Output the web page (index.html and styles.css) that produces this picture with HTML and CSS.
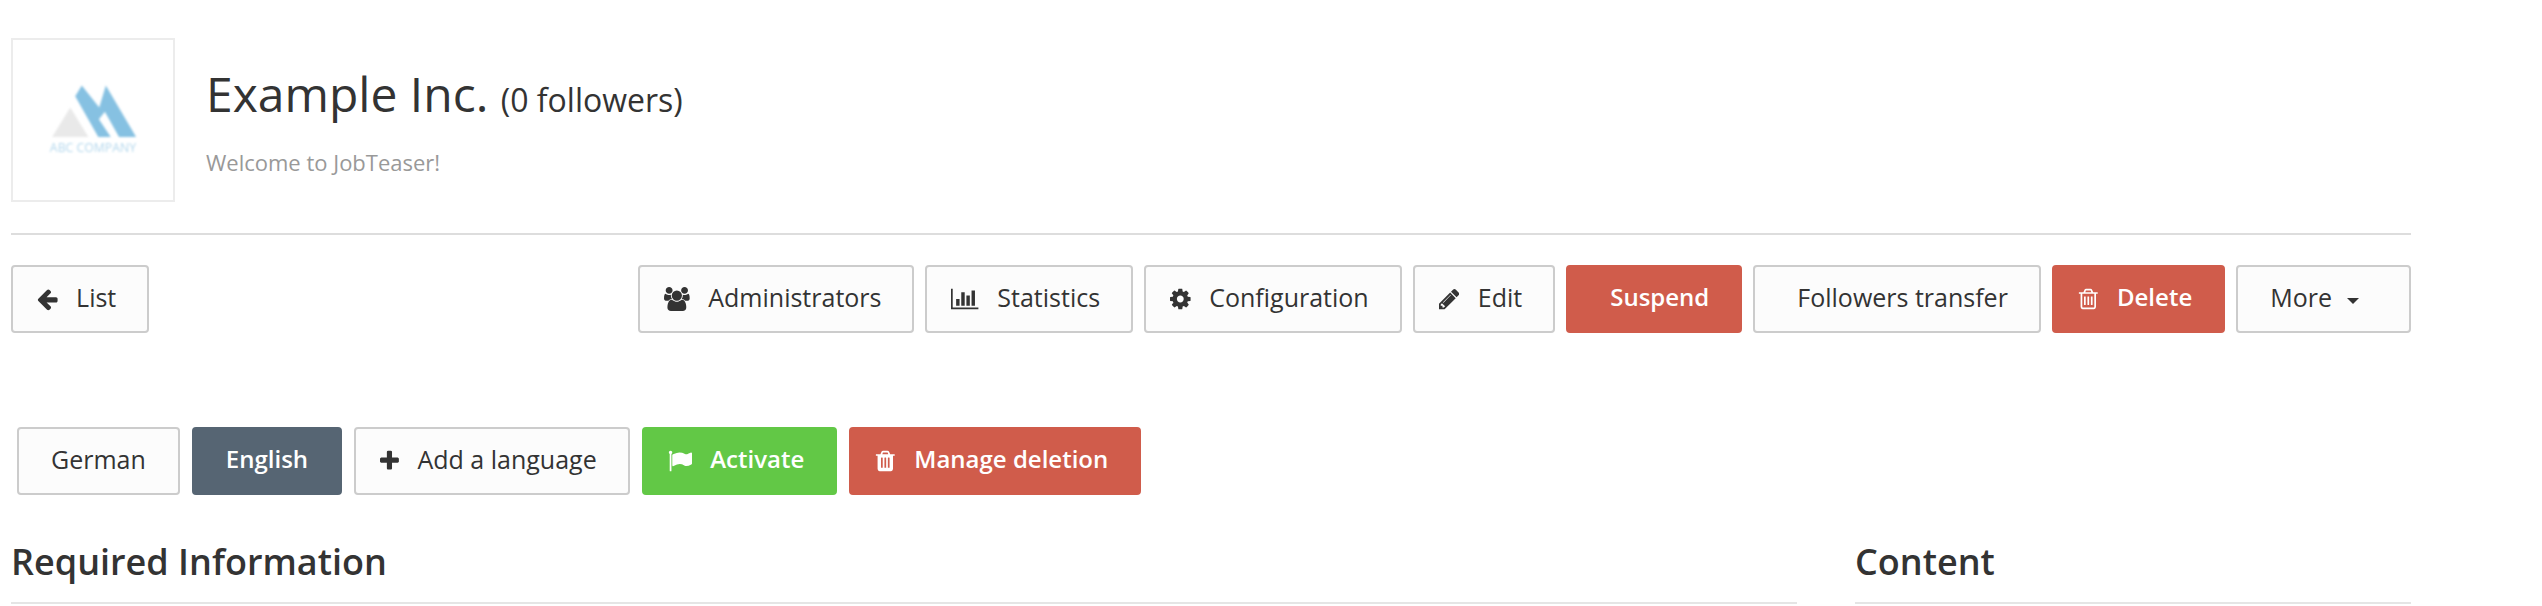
FILE: index.html
```html
<!DOCTYPE html>
<html lang="en">
<head>
<meta charset="utf-8">
<title>Example Inc.</title>
<link rel="stylesheet" href="styles.css">
</head>
<body>
<div class="page">
  <header class="profile">
    <div class="logo">
      <svg viewBox="36 27 486 486" width="160" height="160">
        <defs><filter id="soft"><feGaussianBlur stdDeviation="2.8"/></filter></defs>
        <g filter="url(#soft)">
          <polygon points="210,232 265,322 155,322" fill="#e9e9e9"/>
          <polygon points="225,198 245,165 298,232 318,165 410,322 358,322 315,245 297,268 333,322 295,322" fill="#86c1e2"/>
          <text x="148" y="368" font-size="40" textLength="262" lengthAdjust="spacingAndGlyphs" class="logo-text">ABC COMPANY</text>
        </g>
      </svg>
    </div>
    <div class="identity">
      <h1 class="title">Example Inc. <small class="followers">(0 followers)</small></h1>
      <p class="welcome">Welcome to JobTeaser!</p>
    </div>
  </header>

  <hr class="rule">

  <nav class="toolbar">
    <a class="btn"><svg class="ico w-20" viewBox="128 0 1536 1792"><path d="M1664 896v128q0 53-32.5 90.5t-84.5 37.5h-704l293 294q38 36 38 90t-38 90l-75 76q-38 37-90 37-53 0-91-37l-651-652q-37-37-37-90 0-52 37-91l651-650q38-38 91-38 52 0 90 38l75 74q38 38 38 91t-38 91l-293 293h704q52 0 84.5 37.5t32.5 90.5z"/></svg>List</a>
    <div class="actions">
      <a class="btn"><svg class="ico w-26" viewBox="0 0 1920 1792"><path d="M593 896q-162 5-265 128h-134q-82 0-138-40.5t-56-118.5q0-353 124-353 6 0 43.5 21t97.5 42.5 119 21.5q67 0 133-23-5 37-5 66 0 139 81 256zm1071 637q0 120-73 189.5t-194 69.5h-874q-121 0-194-69.5t-73-189.5q0-53 3.5-103.5t14-109 26.5-108.5 43-97.5 62-81 85.5-53.5 111.5-20q10 0 43 21.5t73 48 107 48 135 21.5 135-21.5 107-48 73-48 43-21.5q61 0 111.5 20t85.5 53.5 62 81 43 97.5 26.5 108.5 14 109 3.5 103.5zm-1024-1277q0 106-75 181t-181 75-181-75-75-181 75-181 181-75 181 75 75 181zm704 384q0 159-112.5 271.5t-271.5 112.5-271.5-112.5-112.5-271.5 112.5-271.5 271.5-112.5 271.5 112.5 112.5 271.5zm576 225q0 78-56 118.5t-138 40.5h-134q-103-123-265-128 81-117 81-256 0-29-5-66 66 23 133 23 59 0 119-21.5t97.5-42.5 43.5-21q124 0 124 353zm-128-609q0 106-75 181t-181 75-181-75-75-181 75-181 181-75 181 75 75 181z"/></svg>Administrators</a>
      <a class="btn"><svg class="ico w-27" viewBox="0 0 2048 1792"><path d="M640 896v512h-256v-512h256zm384-512v1024h-256v-1024h256zm1024 1152v128h-2048v-1536h128v1408h1920zm-640-896v768h-256v-768h256zm384-384v1152h-256v-1152h256z"/></svg>Statistics</a>
      <a class="btn"><svg class="ico w-20" viewBox="128 0 1536 1792"><path d="M1152 896q0-106-75-181t-181-75-181 75-75 181 75 181 181 75 181-75 75-181zm512-109v222q0 12-8 23t-20 13l-185 28q-19 54-39 91 35 50 107 138 10 12 10 25t-9 23q-27 37-99 108t-94 71q-12 0-26-9l-138-108q-44 23-91 38-16 136-29 186-7 28-36 28h-222q-14 0-24.5-8.5t-11.5-21.5l-28-184q-49-16-90-37l-141 107q-10 9-25 9-14 0-25-11-126-114-165-168-7-10-7-23 0-12 8-23 15-21 51-66.5t54-70.5q-27-50-41-99l-183-27q-13-2-21-12.5t-8-23.5v-222q0-12 8-23t19-13l186-28q14-46 39-92-40-57-107-138-10-12-10-24 0-10 9-23 26-36 98.5-107.5t94.5-71.5q13 0 26 10l138 107q44-23 91-38 16-136 29-186 7-28 36-28h222q14 0 24.5 8.5t11.5 21.5l28 184q49 16 90 37l142-107q9-9 24-9 13 0 25 10 129 119 165 170 7 8 7 22 0 12-8 23-15 21-51 66.5t-54 70.5q26 50 41 98l183 28q13 2 21 12.5t8 23.5z"/></svg>Configuration</a>
      <a class="btn"><svg class="ico w-20" viewBox="128 0 1536 1792"><path d="M491 1536l91-91-235-235-91 91v107h128v128h107zm523-928q0-22-22-22-10 0-17 7l-542 542q-7 7-7 17 0 22 22 22 10 0 17-7l542-542q7-7 7-17zm-54-192l416 416-832 832h-416v-416zm683 96q0 53-37 90l-166 166-416-416 166-165q36-38 90-38 53 0 91 38l235 234q37 39 37 91z"/></svg>Edit</a>
      <a class="btn btn-danger btn-blank"><span class="label-strong">Suspend</span></a>
      <a class="btn btn-blank">Followers transfer</a>
      <a class="btn btn-danger"><svg class="ico ico-white w-20" viewBox="128 0 1536 1792"><path d="M704 736v576q0 14-9 23t-23 9h-64q-14 0-23-9t-9-23v-576q0-14 9-23t23-9h64q14 0 23 9t9 23zm256 0v576q0 14-9 23t-23 9h-64q-14 0-23-9t-9-23v-576q0-14 9-23t23-9h64q14 0 23 9t9 23zm256 0v576q0 14-9 23t-23 9h-64q-14 0-23-9t-9-23v-576q0-14 9-23t23-9h64q14 0 23 9t9 23zm128 724v-948h-896v948q0 22 7 40.5t14.5 27 10.5 8.5h832q3 0 10.5-8.5t14.5-27 7-40.5zm-672-1076h448l-48-117q-7-9-17-11h-317q-10 2-17 11zm928 32v64q0 14-9 23t-23 9h-96v948q0 83-47 143.5t-113 60.5h-832q-66 0-113-58.5t-47-141.5v-952h-96q-14 0-23-9t-9-23v-64q0-14 9-23t23-9h309l70-167q15-37 54-63t79-26h320q40 0 79 26t54 63l70 167h309q14 0 23 9t9 23z"/></svg><span class="label-strong">Delete</span></a>
      <a class="btn btn-more">More<span class="caret"></span></a>
    </div>
  </nav>

  <div class="languages">
    <a class="btn btn-lang">German</a>
    <a class="btn btn-lang btn-slate"><span class="label-strong">English</span></a>
    <a class="btn"><svg class="ico w-19" viewBox="192 0 1408 1792"><path d="M1600 736v192q0 40-28 68t-68 28h-416v416q0 40-28 68t-68 28h-192q-40 0-68-28t-28-68v-416h-416q-40 0-68-28t-28-68v-192q0-40 28-68t68-28h416v-416q0-40 28-68t68-28h192q40 0 68 28t28 68v416h416q40 0 68 28t28 68z"/></svg>Add a language</a>
    <a class="btn btn-success"><svg class="ico ico-white w-24" viewBox="0 0 1792 1792"><path d="M320 256q0 72-64 110v1266q0 13-9.5 22.5t-22.5 9.5h-64q-13 0-22.5-9.5t-9.5-22.5v-1266q-64-38-64-110 0-53 37.5-90.5t90.5-37.5 90.5 37.5 37.5 90.5zm1472 64v763q0 25-12.5 38.5t-39.5 27.5q-215 116-369 116-61 0-123.5-22t-108.5-48-115.5-48-142.5-22q-192 0-464 146-17 9-33 9-26 0-45-19t-19-45v-742q0-32 31-55 21-14 79-43 236-120 421-120 107 0 200 29t219 88q38 19 88 19 54 0 117.5-21t110-47 88-47 54.5-21q26 0 45 19t19 45z"/></svg><span class="label-strong">Activate</span></a>
    <a class="btn btn-danger"><svg class="ico ico-white w-20" viewBox="128 0 1536 1792"><path d="M704 1376v-704q0-14-9-23t-23-9h-64q-14 0-23 9t-9 23v704q0 14 9 23t23 9h64q14 0 23-9t9-23zm256 0v-704q0-14-9-23t-23-9h-64q-14 0-23 9t-9 23v704q0 14 9 23t23 9h64q14 0 23-9t9-23zm256 0v-704q0-14-9-23t-23-9h-64q-14 0-23 9t-9 23v704q0 14 9 23t23 9h64q14 0 23-9t9-23zm-544-992h448l-48-117q-7-9-17-11h-317q-10 2-17 11zm928 32v64q0 14-9 23t-23 9h-96v948q0 83-47 143.5t-113 60.5h-832q-66 0-113-58.5t-47-141.5v-952h-96q-14 0-23-9t-9-23v-64q0-14 9-23t23-9h309l70-167q15-37 54-63t79-26h320q40 0 79 26t54 63l70 167h309q14 0 23 9t9 23z"/></svg><span class="label-strong">Manage deletion</span></a>
  </div>

  <div class="sections">
    <h2 class="section-title">Required Information</h2>
    <h2 class="section-title">Content</h2>
  </div>
</div>
</body>
</html>
```
FILE: styles.css
```css
* { box-sizing: border-box; }
html, body { margin: 0; padding: 0; background: #fff; overflow: hidden; }
body { font-family: "Open Sans", "Liberation Sans", sans-serif; color: #333; }
.page { width: 2400px; margin-left: 11px; padding-top: 38px; }

.profile { display: flex; align-items: flex-start; gap: 31px; }
.logo { width: 164px; height: 164px; border: 2px solid #ececec; flex: none; }
.logo svg { display: block; }
.logo-text { font-family: "Open Sans", sans-serif; fill: #b4d8ed; }
.identity { padding-top: 25px; }
.title { margin: 0; font-size: 48px; line-height: 62px; font-weight: 400; color: #333; }
.followers { font-size: 32px; font-weight: 400; color: #333; }
.welcome { margin: 16px 0 0; font-size: 22px; line-height: 30px; color: #999; }

.rule { border: 0; height: 2px; background: #ddd; margin: 31px 0 30px; }

.toolbar { display: flex; justify-content: space-between; }
.actions { display: flex; gap: 11px; }

.btn {
  display: inline-flex; align-items: center; height: 68px;
  padding: 0 31px 4px 24px;
  border: 2px solid #ccc; border-radius: 4px;
  background: #fcfcfc; color: #333;
  font-size: 25px; line-height: 1; white-space: nowrap;
}
.btn-blank { padding-left: 42px; }
.btn-more { padding-right: 50px; padding-left: 32px; }
.btn-lang { padding-left: 32px; padding-right: 32px; }
.btn-danger { background: #d05c4b; border-color: #d05c4b; color: #fff; }
.btn-slate { background: #566573; border-color: #566573; color: #fff; }
.btn-success { background: #62c846; border-color: #62c846; color: #fff; }
.label-strong { font-weight: 600; font-size: 24px; }

.ico { height: 24px; margin: 3px 18.5px 0 0; fill: #333; flex: none; }
.w-19 { width: 18.9px; }
.w-20 { width: 20.6px; }
.w-24 { width: 24px; }
.w-26 { width: 25.7px; }
.w-27 { width: 27.4px; }
.ico-white { fill: #fff; }
.caret {
  width: 0; height: 0; margin-left: 15px; margin-top: 8px;
  border-left: 6px solid transparent; border-right: 6px solid transparent; border-top: 6px solid #333;
}

.languages { display: flex; gap: 12px; margin: 94px 0 0 6px; }

.sections { display: grid; grid-template-columns: 1786px 556px; column-gap: 58px; margin-top: 41px; }
.section-title {
  margin: 0; height: 68px; padding-top: 2px;
  font-size: 36px; line-height: 48px; font-weight: 600; color: #333;
  border-bottom: 2px solid #e5e5e5;
}
```
